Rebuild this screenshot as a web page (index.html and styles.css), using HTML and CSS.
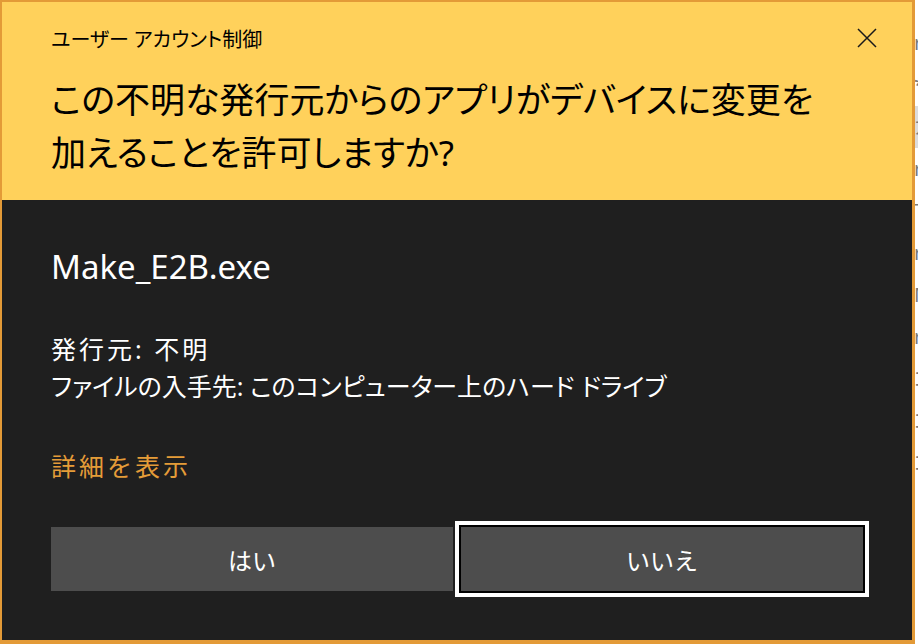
FILE: index.html
```html
<!DOCTYPE html>
<html lang="ja">
<head>
<meta charset="utf-8">
<title>ユーザー アカウント制御</title>
<link rel="stylesheet" href="styles.css">
</head>
<body>
<div class="screen">
    <div class="uac_dialog">
        <div class="uac_header">
            <div class="title_row">
                <span class="title">ユーザー アカウント制御</span>
                <span class="close_btn">
                    <svg width="20" height="20" viewBox="0 0 20 20">
                        <path d="M1 1 L19 19 M19 1 L1 19" stroke="#1a1a1a" stroke-width="1.5" fill="none"/>
                    </svg>
                </span>
            </div>
            <div class="question">この不明な発行元からのアプリがデバイスに変更を<br>加えることを許可しますか?</div>
        </div>
        <div class="uac_body">
            <div class="app_name">Make_E2B.exe</div>
            <div class="info">
                <div class="publisher">発行元: 不明</div>
                <div>ファイルの入手先: このコンピューター上のハード ドライブ</div>
            </div>
            <div class="details_link">詳細を表示</div>
            <div class="button_row">
                <div class="uac_button">はい</div>
                <div class="uac_button focused">いいえ</div>
            </div>
        </div>
    </div>
    <div class="behind">
        <div class="behind_line">r</div>
        <div class="behind_line">*</div>
        <div class="behind_line shaded">ガ</div>
        <div class="behind_line">r</div>
        <div class="behind_line">T</div>
        <div class="behind_line">r</div>
        <div class="behind_line">M</div>
        <div class="behind_line">r</div>
        <div class="behind_line">ゴ</div>
        <div class="behind_line">ゴ</div>
        <div class="behind_line">ゴ</div>
    </div>
</div>
</body>
</html>
```

FILE: styles.css
```css
html, body {
    margin: 0;
    padding: 0;
    background-color: #FFFFFF;
}

body {
    font-family: "Noto Sans", "Noto Sans CJK JP", sans-serif;
    font-feature-settings: "palt";
    overflow: hidden;
}

.screen {
    display: flex;
    width: 918px;
    height: 644px;
}

.uac_dialog {
    width: 910px;
    flex: none;
    border: 2px solid #E39A37;
    border-right-width: 3px;
    border-bottom: 4px solid #E39A37;
    display: flex;
    flex-direction: column;
    background-color: #1F1F1F;
}

.uac_header {
    background-color: #FFD15B;
    height: 198px;
    box-sizing: border-box;
    padding: 20px 35px 0 49px;
    color: #000000;
}

.title_row {
    display: flex;
    justify-content: space-between;
    align-items: center;
    height: 32px;
}
.title {
    font-size: 20px;
}
.close_btn {
    display: flex;
    width: 20px;
    height: 20px;
}

.question {
    margin-top: 19px;
    font-size: 35px;
    line-height: 53px;
}

.uac_body {
    flex: 1;
    padding: 0 49px;
    color: #FFFFFF;
}

.app_name {
    margin-top: 47px;
    font-size: 33px;
    line-height: 40px;
}

.info {
    margin-top: 44px;
    font-size: 25px;
    line-height: 37px;
}
.publisher {
    letter-spacing: 3px;
}

.details_link {
    margin-top: 43px;
    font-size: 25px;
    line-height: 37px;
    letter-spacing: 3px;
    font-feature-settings: normal;
    color: #E59C38;
}

.button_row {
    display: flex;
    gap: 8px;
    margin-top: 42px;
}
.uac_button {
    flex: 1;
    height: 64px;
    background-color: #4D4D4D;
    font-size: 24px;
    font-feature-settings: normal;
    display: flex;
    align-items: center;
    justify-content: center;
}
.uac_button.focused {
    box-shadow: 0 0 0 2px #000000, 0 0 0 6px #FFFFFF;
}

.behind {
    flex: 1;
    overflow: hidden;
    padding-top: 22px;
    color: #7A7A7A;
    font-size: 20px;
}
.behind_line {
    height: 42px;
    line-height: 42px;
    margin-left: -1px;
}
.behind_line.shaded {
    background-color: #DCDCDC;
}
```
